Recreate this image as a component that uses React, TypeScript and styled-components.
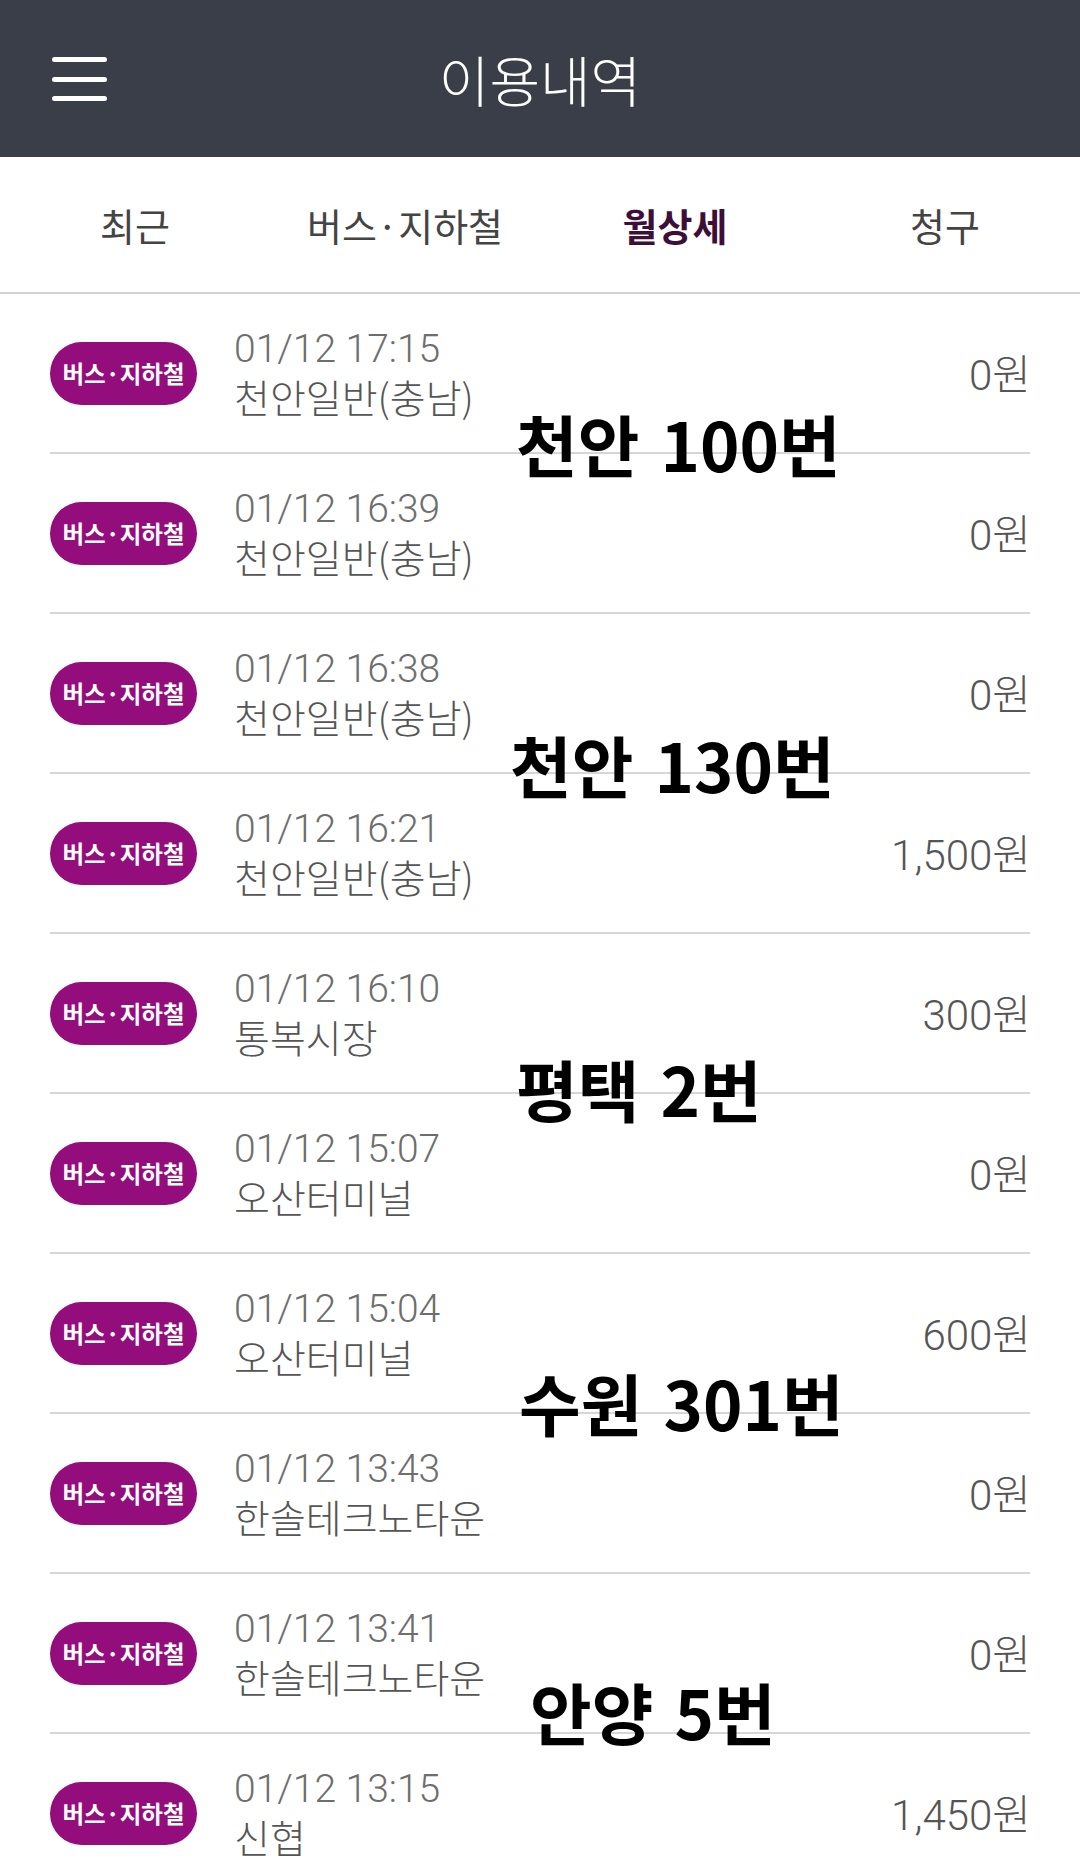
import React from "react";
import styled, { createGlobalStyle } from "styled-components";

const GlobalStyle = createGlobalStyle`
    html, body {
        margin: 0;
        padding: 0;
        background: #ffffff;
        font-family: "Noto Sans CJK KR", "Noto Sans", sans-serif;
    }
    #root {
        width: 1080px;
        height: 1860px;
        overflow: hidden;
    }
`

const Page = styled.div`
    width: 1080px;
    display: flex;
    flex-direction: column;
`

const Header = styled.header`
    height: 157px;
    background-color: #393e48;
    display: flex;
    align-items: center;
    justify-content: center;
    position: relative;
`

const MenuButton = styled.button`
    position: absolute;
    left: 52px;
    top: 57px;
    width: 55px;
    padding: 0;
    border: none;
    background: none;
    display: flex;
    flex-direction: column;
    gap: 14.5px;
    & span {
        display: block;
        height: 5px;
        border-radius: 3px;
        background: #ffffff;
    }
`

const Title = styled.h1`
    margin: 0;
    color: #ffffff;
    font-size: 55px;
    font-weight: 300;
    margin-top: -2px;
`

const Tabs = styled.nav`
    height: 135px;
    display: flex;
    border-bottom: 2px solid #d2d2d2;
`

const Tab = styled.div<{ active?: boolean }>`
    flex: 1;
    display: flex;
    align-items: center;
    justify-content: center;
    font-size: 38px;
    font-weight: ${props => props.active ? 700 : 400};
    color: ${props => props.active ? '#3d0f38' : '#444444'};
    position: relative;
    ::after {
        content: '';
        display: ${props => props.active ? 'block' : 'none'};
        position: absolute;
        left: 0;
        right: 0;
        bottom: -2px;
        height: 6px;
        background: #3d0f38;
    }
`

const List = styled.div`
    position: relative;
    padding: 0 50px;
`

const Row = styled.div`
    height: 158px;
    display: flex;
    align-items: center;
    border-bottom: 2px solid #d6d6d6;
`

const Badge = styled.span`
    width: 147px;
    height: 63px;
    flex: none;
    border-radius: 32px;
    background: #930d7c;
    color: #ffffff;
    font-size: 23.5px;
    font-weight: 700;
    display: flex;
    align-items: center;
    justify-content: center;
    margin-right: 37px;
`

const Info = styled.div`
    flex: 1;
    display: flex;
    flex-direction: column;
    margin-top: 2px;
`

const Time = styled.div`
    font-family: Roboto, "Noto Sans", sans-serif;
    font-weight: 300;
    font-size: 39px;
    line-height: 44px;
    color: #6e6e6e;
`

const Place = styled.div`
    font-size: 39px;
    font-weight: 300;
    line-height: 50px;
    color: #555555;
`

const Amount = styled.div`
    font-family: Roboto, "Noto Sans CJK KR", sans-serif;
    font-weight: 300;
    font-size: 42px;
    color: #555555;
    margin-top: -4px;
    & span {
        font-family: "Noto Sans CJK KR", sans-serif;
        letter-spacing: -1px;
    }
`

const Note = styled.div<{ x: number; y: number }>`
    position: absolute;
    left: ${props => props.x}px;
    top: ${props => props.y}px;
    font-size: 67px;
    font-weight: 700;
    color: #000000;
    line-height: 1;
    word-spacing: 6px;
    white-space: nowrap;
`

const rows = [
    { time: "01/12 17:15", place: "천안일반(충남)", amount: "0" },
    { time: "01/12 16:39", place: "천안일반(충남)", amount: "0" },
    { time: "01/12 16:38", place: "천안일반(충남)", amount: "0" },
    { time: "01/12 16:21", place: "천안일반(충남)", amount: "1,500" },
    { time: "01/12 16:10", place: "통복시장", amount: "300" },
    { time: "01/12 15:07", place: "오산터미널", amount: "0" },
    { time: "01/12 15:04", place: "오산터미널", amount: "600" },
    { time: "01/12 13:43", place: "한솔테크노타운", amount: "0" },
    { time: "01/12 13:41", place: "한솔테크노타운", amount: "0" },
    { time: "01/12 13:15", place: "신협", amount: "1,450" },
]

const notes = [
    { text: "천안 100번", x: 516, y: 115 },
    { text: "천안 130번", x: 510, y: 436 },
    { text: "평택 2번", x: 516, y: 760 },
    { text: "수원 301번", x: 519, y: 1074 },
    { text: "안양 5번", x: 530, y: 1383 },
]

export default function App() {
    return (
        <Page>
            <GlobalStyle />
            <Header>
                <MenuButton aria-label="menu"><span /><span /><span /></MenuButton>
                <Title>이용내역</Title>
            </Header>
            <Tabs>
                <Tab>최근</Tab>
                <Tab>버스·지하철</Tab>
                <Tab active>월상세</Tab>
                <Tab>청구</Tab>
            </Tabs>
            <List>
                {rows.map((r, i) => (
                    <Row key={i}>
                        <Badge>버스·지하철</Badge>
                        <Info>
                            <Time>{r.time}</Time>
                            <Place>{r.place}</Place>
                        </Info>
                        <Amount>{r.amount}<span>원</span></Amount>
                    </Row>
                ))}
                {notes.map(n => <Note key={n.text} x={n.x} y={n.y}>{n.text}</Note>)}
            </List>
        </Page>
    )
}
